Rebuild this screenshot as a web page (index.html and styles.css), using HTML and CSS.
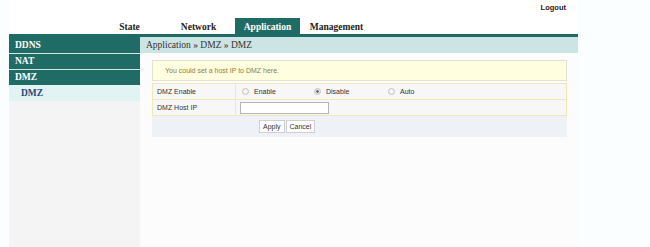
FILE: index.html
```html
<!DOCTYPE html>
<html lang="en">
<head>
    <meta charset="UTF-8">
    <title>Application - DMZ</title>
    <link rel="stylesheet" href="styles.css">
</head>
<body>
    <div class="page">
        <div class="header">
            <div class="logout">Logout</div>
            <ul class="tabs">
                <li class="tab">State</li>
                <li class="tab">Network</li>
                <li class="tab active">Application</li>
                <li class="tab">Management</li>
            </ul>
        </div>

        <div class="main">
            <ul class="sidebar">
                <li class="menu">DDNS</li>
                <li class="menu">NAT</li>
                <li class="menu">DMZ</li>
                <li class="submenu">DMZ</li>
            </ul>

            <div class="content">
                <div class="crumb">Application &raquo; DMZ &raquo; DMZ</div>

                <div class="panel">
                    <div class="notice">You could set a host IP to DMZ here.</div>

                    <div class="form">
                        <div class="row">
                            <div class="label">DMZ Enable</div>
                            <div class="field">
                                <label class="choice"><input type="radio" name="dmz"> Enable</label>
                                <label class="choice wide"><input type="radio" name="dmz" checked> Disable</label>
                                <label class="choice"><input type="radio" name="dmz"> Auto</label>
                            </div>
                        </div>
                        <div class="row">
                            <div class="label">DMZ Host IP</div>
                            <div class="field">
                                <input type="text" class="text-input">
                            </div>
                        </div>
                        <div class="actions">
                            <button class="btn">Apply</button>
                            <button class="btn">Cancel</button>
                        </div>
                    </div>
                </div>
            </div>
        </div>
    </div>
</body>
</html>
```

FILE: styles.css
```css
body {
    margin: 0;
    background: #fbfefe;
    font-family: 'Liberation Sans', Arial, sans-serif;
    color: #333;
}

.page {
    width: 569px;
    margin-left: 9px;
}

.header {
    position: relative;
    height: 34px;
    background: #fff;
}

.logout {
    position: absolute;
    top: 3px;
    right: 12px;
    font-size: 7.5px;
    font-weight: bold;
    color: #222;
}

.tabs {
    list-style: none;
    margin: 0;
    padding: 18px 0 0 88px;
    display: flex;
    gap: 4px;
}

.tab {
    width: 65px;
    height: 16px;
    box-sizing: border-box;
    padding-top: 4px;
    text-align: center;
    font-family: 'Liberation Serif', 'Times New Roman', serif;
    font-size: 9.5px;
    font-weight: bold;
    color: #222;
}

.tab.active {
    background-color: #1f6c67;
    color: #fff;
}

.main {
    display: flex;
    border-top: 3px solid #1f6c67;
}

.sidebar {
    list-style: none;
    margin: 0;
    padding: 0;
    width: 131px;
    min-height: 210px;
    background: #f4f4f4;
    font-family: 'Liberation Serif', 'Times New Roman', serif;
    font-size: 9.5px;
    font-weight: bold;
}

.menu {
    height: 15px;
    line-height: 15px;
    padding-left: 6px;
    background-color: #1f6c67;
    color: #fff;
    border-bottom: 1px solid #d9e6e6;
}

.menu:first-child {
    height: 16px;
    line-height: 16px;
}

.menu:nth-child(3) {
    border-bottom: none;
}

.submenu {
    height: 16px;
    line-height: 16px;
    padding-left: 12px;
    background-color: #e1f3f3;
    color: #28487a;
}

.content {
    flex: 1;
    background: #fcfcfc;
}

.crumb {
    height: 16px;
    line-height: 16px;
    padding-left: 6px;
    background-color: #cde4e4;
    font-family: 'Liberation Serif', 'Times New Roman', serif;
    font-size: 9.5px;
    color: #333;
}

.panel {
    padding: 7px 11px 0 12px;
}

.notice {
    height: 19px;
    line-height: 19px;
    padding-left: 12px;
    border: 1px solid #e2e2d4;
    background-color: #ffffe0;
    font-size: 7px;
    color: #8c7b45;
}

.form {
    margin-top: 2px;
    font-size: 7px;
    color: #333;
}

.row {
    display: flex;
    height: 15px;
    background-color: #f7f7f7;
    border: 1px solid #f3e7b5;
    border-top: none;
}

.row:first-child {
    border-top: 1px solid #f3e7b5;
}

.label {
    width: 78px;
    padding-left: 4px;
    line-height: 15px;
    border-right: 1px solid #f3e7b5;
}

.field {
    display: flex;
    align-items: center;
    padding-left: 4px;
}

.choice {
    display: flex;
    align-items: center;
    gap: 5px;
    width: 70px;
    margin-left: 2px;
}

.choice.wide {
    width: 72px;
}

.choice input {
    appearance: none;
    margin: 0;
    width: 7px;
    height: 7px;
    border-radius: 50%;
    border: 1px solid #c4c4c4;
    background: radial-gradient(circle, #fff 0%, #e4e4e4 100%);
    box-sizing: border-box;
}

.choice input:checked {
    background: radial-gradient(circle, #555 0, #777 30%, #e6e6e6 45%);
}

.text-input {
    width: 89px;
    height: 12px;
    box-sizing: border-box;
    padding: 0;
    border: 1px solid #b5b5b5;
    background: #fff;
}

.actions {
    height: 21px;
    padding-left: 107px;
    display: flex;
    align-items: center;
    gap: 1px;
    background-color: #eef1f5;
}

.btn {
    height: 13px;
    padding: 0 3px;
    border: 1px solid #cfcfcf;
    background: #fff;
    font-family: 'Liberation Sans', Arial, sans-serif;
    font-size: 7px;
    color: #333;
}
```
